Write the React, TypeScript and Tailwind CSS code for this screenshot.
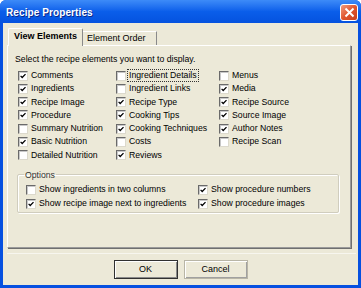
import type { ReactNode } from "react";

type Item = { label: string; checked: boolean; focus?: boolean };

const col1: Item[] = [
  { label: "Comments", checked: true },
  { label: "Ingredients", checked: true },
  { label: "Recipe Image", checked: true },
  { label: "Procedure", checked: true },
  { label: "Summary Nutrition", checked: false },
  { label: "Basic Nutrition", checked: true },
  { label: "Detailed Nutrition", checked: false },
];

const col2: Item[] = [
  { label: "Ingredient Details", checked: false, focus: true },
  { label: "Ingredient Links", checked: false },
  { label: "Recipe Type", checked: true },
  { label: "Cooking Tips", checked: true },
  { label: "Cooking Techniques", checked: true },
  { label: "Costs", checked: false },
  { label: "Reviews", checked: true },
];

const col3: Item[] = [
  { label: "Menus", checked: false },
  { label: "Media", checked: true },
  { label: "Recipe Source", checked: true },
  { label: "Source Image", checked: true },
  { label: "Author Notes", checked: true },
  { label: "Recipe Scan", checked: false },
];

function Box({ checked }: { checked: boolean }) {
  return (
    <span className="w-[10px] h-[10px] shrink-0 bg-white border border-t-[#6a6a6a] border-l-[#6a6a6a] border-r-[#dcd9cc] border-b-[#dcd9cc] shadow-[inset_1px_1px_0_#c8c8c8] flex items-center justify-center">
      {checked && (
        <svg width="8" height="8" viewBox="0 0 8 8">
          <path d="M1.6 3.9 L3.2 5.5 L6.5 2.1" fill="none" stroke="#000" strokeWidth="1.3" />
        </svg>
      )}
    </span>
  );
}

function Check({ item, h = "h-[13.25px]" }: { item: Item; h?: string }) {
  return (
    <div className={`flex items-center gap-[3px] ${h}`}>
      <Box checked={item.checked} />
      <span
        className={`leading-[11px] whitespace-nowrap ${
          item.focus ? "outline outline-1 outline-dotted outline-[#333] outline-offset-0 px-[1px] -ml-[1px]" : ""
        }`}
      >
        {item.label}
      </span>
    </div>
  );
}

function Button({ children, primary }: { children: ReactNode; primary?: boolean }) {
  return (
    <button
      type="button"
      className={`w-[64px] h-[19px] text-[9px] text-black bg-[#ECE9D8] flex items-center justify-center ${
        primary
          ? "border border-[#303030] shadow-[inset_1px_1px_0_#fff,inset_-1px_-1px_0_#8a8a8a]"
          : "border border-[#b8b5a6] shadow-[inset_1px_1px_0_#fff,inset_-1px_-1px_0_#a0a0a0]"
      }`}
    >
      {children}
    </button>
  );
}

export default function App() {
  return (
    <div className="w-[361px] h-[288px] flex flex-col bg-[#0650E0] rounded-t-[6px] overflow-hidden font-['Liberation_Sans',Arial,sans-serif] text-black">
      {/* title bar */}
      <div className="h-[23px] shrink-0 flex items-center pl-[6px] pr-[3px] bg-gradient-to-b from-[#3D8BF8] via-[#0A5EEA] to-[#0552DF]">
        <span className="text-white font-bold text-[10px] tracking-[0.1px] pt-[2px] [text-shadow:1px_1px_0_#0a2a8a]">
          Recipe Properties
        </span>
        <div className="ml-auto mt-[1px] w-[18px] h-[17px] rounded-[3px] border border-white bg-gradient-to-br from-[#F09A7E] via-[#E0552E] to-[#C8401E] flex items-center justify-center">
          <svg width="11" height="11" viewBox="0 0 11 11">
            <path d="M1.5 1.5 L9.5 9.5 M9.5 1.5 L1.5 9.5" stroke="#fff" strokeWidth="2" />
          </svg>
        </div>
      </div>

      {/* dialog body */}
      <div className="flex-1 mx-[3px] mb-[3px] bg-[#ECE9D8] flex flex-col text-[8.7px]">
        {/* tabs */}
        <div className="mt-[5px] pl-[5px] h-[17px] flex items-end relative z-10">
          <div className="w-[75px] h-[18px] -mb-[1px] bg-[#ECE9D8] border-t border-l border-white border-r border-r-[#8a8a8a] rounded-t-[2px] flex items-center justify-center font-bold text-[9px] pb-[1px]">
            View Elements
          </div>
          <div className="w-[74px] h-[14px] bg-[#ECE9D8] border-t border-white border-r border-r-[#8a8a8a] flex items-center pl-[4px] text-[9px]">
            Element Order
          </div>
        </div>

        {/* tab panel */}
        <div className="ml-[4px] w-[344px] h-[203px] border border-t-white border-l-white border-r-[#9a9a9a] border-b-[#9a9a9a] shadow-[1px_1px_0_#6f6f6f] flex flex-col">
          <div className="pl-[7px] pt-[8px] leading-[11px]">Select the recipe elements you want to display.</div>

          <div className="mt-[4px] pl-[10px] grid grid-cols-[98px_103px_1fr]">
            <div className="flex flex-col">
              {col1.map((it) => (
                <Check key={it.label} item={it} />
              ))}
            </div>
            <div className="flex flex-col">
              {col2.map((it) => (
                <Check key={it.label} item={it} />
              ))}
            </div>
            <div className="flex flex-col">
              {col3.map((it) => (
                <Check key={it.label} item={it} />
              ))}
            </div>
          </div>

          {/* options group */}
          <fieldset className="ml-[9px] mt-[8px] w-[322px] h-[43px] border border-[#D0CDBE] shadow-[inset_1px_1px_0_#fff,1px_1px_0_#fff] rounded-[2px] pl-[8px] pt-[3px]">
            <legend className="px-[1px] -ml-[2px] leading-[10px] text-[#333]">Options</legend>
            <div className="grid grid-cols-[172px_1fr]">
              <Check item={{ label: "Show ingredients in two columns", checked: false }} h="h-[14px]" />
              <Check item={{ label: "Show procedure numbers", checked: true }} h="h-[14px]" />
              <Check item={{ label: "Show recipe image next to ingredients", checked: true }} h="h-[14px]" />
              <Check item={{ label: "Show procedure images", checked: true }} h="h-[14px]" />
            </div>
          </fieldset>
        </div>

        <div className="mt-[5px] ml-[4px] mr-[2px] h-[1px] bg-[#f7f6ef]" />

        <div className="mt-[6px] flex justify-center gap-[6px]">
          <Button primary>OK</Button>
          <Button>Cancel</Button>
        </div>
      </div>
    </div>
  );
}
